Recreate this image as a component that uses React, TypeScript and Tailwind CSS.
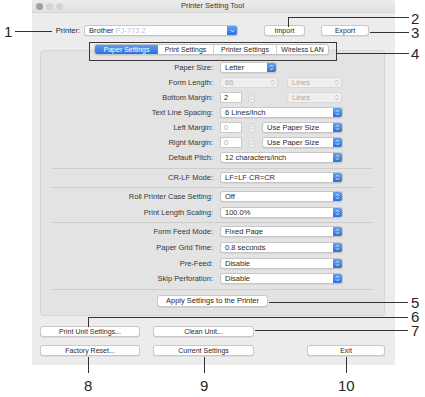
import React from "react";

const Arrows = ({ color }: { color: string }) => (
  <svg width="5" height="7" viewBox="0 0 5 7" fill="none" stroke={color} strokeWidth="0.9">
    <path d="M1 2.7 2.5 1.2 4 2.7M1 4.3 2.5 5.8 4 4.3" />
  </svg>
);

const Popup = ({ value, className, disabled }: { value: string; className: string; disabled?: boolean }) => (
  <div
    className={`flex h-[11px] items-center rounded-[3px] border ${
      disabled
        ? "border-[#d9d9d9] bg-[#efefef] text-[#ababab]"
        : "border-[#c6c6c6] bg-white text-[#2a2a2a] shadow-[0_0.5px_0.5px_rgba(0,0,0,0.12)]"
    } ${className}`}
  >
    <span className="flex-1 truncate pl-[4px] leading-none">{value}</span>
    {disabled ? (
      <span className="flex w-[9px] justify-center">
        <Arrows color="#b8b8b8" />
      </span>
    ) : (
      <span className="flex h-full w-[9px] items-center justify-center rounded-r-[2px] bg-gradient-to-b from-[#64a2f1] to-[#2d6fdc]">
        <Arrows color="#fff" />
      </span>
    )}
  </div>
);

const Field = ({ value, dim }: { value: string; dim?: boolean }) => (
  <div
    className={`flex h-[11px] w-[22px] items-center border border-[#c9c9c9] bg-white pl-[3px] leading-none ${
      dim ? "text-[#b0b0b0]" : "text-[#2a2a2a]"
    }`}
  >
    {value}
  </div>
);

const Stepper = () => (
  <div className="ml-[6px] flex h-[10px] w-[7px] items-center justify-center rounded-[3px] border border-[#d4d4d4] bg-[#f3f3f3]">
    <Arrows color="#b5b5b5" />
  </div>
);

const Row = ({ label, className = "", children }: { label: string; className?: string; children: React.ReactNode }) => (
  <div className={`flex h-[15px] items-center ${className}`}>
    <div className="w-[172px] text-right leading-none text-[#383838]">{label}</div>
    <div className="ml-[7px] flex items-center">{children}</div>
  </div>
);

const Sep = ({ className }: { className: string }) => <div className={`mx-[11px] h-px bg-[#cdcdcd] ${className}`} />;

const Btn = ({ children, className }: { children: React.ReactNode; className: string }) => (
  <div
    className={`flex h-[11px] items-center justify-center rounded-[3px] border border-[#c8c8c8] bg-white text-[7px] leading-none text-[#2a2a2a] shadow-[0_0.5px_0.5px_rgba(0,0,0,0.12)] ${className}`}
  >
    {children}
  </div>
);

// callout numbers: line box 11px, top = glyph top
const Num = ({ n, x, y }: { n: string; x: number; y: number }) => (
  <div className="absolute h-[11px] text-[15px] leading-[11px] text-[#262626]" style={{ left: x, top: y }}>
    {n}
  </div>
);

const HLine = ({ x, y, w }: { x: number; y: number; w: number }) => (
  <div className="absolute h-px bg-[#333]" style={{ left: x, top: y, width: w }} />
);

const VLine = ({ x, y, h }: { x: number; y: number; h: number }) => (
  <div className="absolute w-px bg-[#333]" style={{ left: x, top: y, height: h }} />
);

export default function App() {
  const tabs = [
    { t: "Paper Settings", w: "w-[63px]" },
    { t: "Print Settings", w: "w-[55px]" },
    { t: "Printer Settings", w: "w-[63px]" },
    { t: "Wireless LAN", w: "w-[52px]" },
  ];
  return (
    <div className="relative h-[397px] w-[425px] overflow-hidden bg-white font-['Liberation_Sans',Arial,sans-serif] text-[7.5px]">
      <div className="ml-[32px] flex h-[365px] w-[363px] flex-col bg-[#ececec]">
        {/* title bar */}
        <div className="flex h-[13px] items-center border-b border-[#d8d8d8] bg-gradient-to-b from-[#ececec] to-[#e0e0e0]">
          <div className="flex w-[40px] gap-[3px] pl-[4px]">
            <span className="h-[7px] w-[7px] rounded-full bg-[#a89e95]" />
            <span className="h-[7px] w-[7px] rounded-full bg-[#d3d3d3]" />
            <span className="h-[7px] w-[7px] rounded-full bg-[#d3d3d3]" />
          </div>
          <div className="flex-1 text-center leading-none text-[#3a3a3a]">Printer Setting Tool</div>
          <div className="w-[42px]" />
        </div>

        {/* printer row */}
        <div className="mt-[12px] flex h-[11px] items-center">
          <div className="w-[48px] text-right leading-none text-[#2a2a2a]">Printer:</div>
          <div className="ml-[4px] flex h-[11px] w-[154px] items-center rounded-[3px] border border-[#c6c6c6] bg-white shadow-[0_0.5px_0.5px_rgba(0,0,0,0.12)]">
            <span className="flex-1 pl-[4px] leading-none text-[#2a2a2a]">
              Brother <span className="text-[#b5c3d6] blur-[0.7px]">PJ-773 2</span>
            </span>
            <span className="flex h-full w-[10px] items-center justify-center rounded-r-[2px] bg-gradient-to-b from-[#64a2f1] to-[#2d6fdc]">
              <svg width="5" height="4" viewBox="0 0 5 4" fill="none" stroke="#fff" strokeWidth="0.9">
                <path d="M1 1.2 2.5 2.7 4 1.2" />
              </svg>
            </span>
          </div>
          <Btn className="ml-[26px] w-[41px]">Import</Btn>
          <Btn className="ml-[16px] w-[48px]">Export</Btn>
        </div>

        {/* tabs */}
        <div className="relative z-10 mt-[8px] flex h-[11px] pl-[62px]">
          <div className="flex h-[11px] overflow-hidden rounded-[3px] border border-[#c4c4c4] bg-white text-[7px] leading-none shadow-[0_0.5px_0.5px_rgba(0,0,0,0.12)]">
            {tabs.map((tab, i) => (
              <div
                key={tab.t}
                className={`flex items-center justify-center ${tab.w} ${
                  i === 0 ? "bg-gradient-to-b from-[#5d9cf0] to-[#2f70dc] text-white" : "text-[#2a2a2a]"
                } ${i > 1 ? "border-l border-[#d0d0d0]" : ""}`}
              >
                {tab.t}
              </div>
            ))}
          </div>
        </div>

        {/* panel */}
        <div className="-mt-[5px] ml-[8px] w-[345px] rounded-[3px] border border-[#d6d6d6] bg-[#e3e3e3] pb-[8px] pt-[9px]">
          <Row label="Paper Size:">
            <Popup value="Letter" className="w-[57px]" />
          </Row>
          <Row label="Form Length:">
            <Popup value="66" className="w-[58px]" disabled />
            <Popup value="Lines" className="ml-[9px] w-[55px]" disabled />
          </Row>
          <Row label="Bottom Margin:">
            <Field value="2" />
            <Stepper />
            <Popup value="Lines" className="ml-[32px] w-[55px]" disabled />
          </Row>
          <Row label="Text Line Spacing:">
            <Popup value="6 Lines/Inch" className="w-[123px]" />
          </Row>
          <Row label="Left Margin:">
            <Field value="0" dim />
            <Stepper />
            <Popup value="Use Paper Size" className="ml-[7px] w-[81px]" />
          </Row>
          <Row label="Right Margin:">
            <Field value="0" dim />
            <Stepper />
            <Popup value="Use Paper Size" className="ml-[7px] w-[81px]" />
          </Row>
          <Row label="Default Pitch:">
            <Popup value="12 characters/inch" className="w-[123px]" />
          </Row>
          <Sep className="mt-[3px]" />
          <Row label="CR-LF Mode:" className="mt-[1px]">
            <Popup value="LF=LF CR=CR" className="w-[123px]" />
          </Row>
          <Sep className="mt-[2px]" />
          <Row label="Roll Printer Case Setting:" className="mt-[1px]">
            <Popup value="Off" className="w-[123px]" />
          </Row>
          <Row label="Print Length Scaling:" className="mt-[1px]">
            <Popup value="100.0%" className="w-[123px]" />
          </Row>
          <Sep className="mt-[2px]" />
          <Row label="Form Feed Mode:" className="mt-[1px]">
            <Popup value="Fixed Page" className="w-[123px]" />
          </Row>
          <Row label="Paper Grid Time:" className="mt-[1px]">
            <Popup value="0.8 seconds" className="w-[123px]" />
          </Row>
          <Row label="Pre-Feed:" className="mt-[1px]">
            <Popup value="Disable" className="w-[123px]" />
          </Row>
          <Row label="Skip Perforation:">
            <Popup value="Disable" className="w-[123px]" />
          </Row>
          <Sep className="mt-[3px]" />
          <Btn className="mx-auto mt-[5px] !h-[12px] w-[111px] !text-[7.5px]">Apply Settings to the Printer</Btn>
        </div>

        {/* bottom buttons */}
        <div className="mt-[10px] flex">
          <Btn className="ml-[8px] w-[100px]">Print Unit Settings...</Btn>
          <Btn className="ml-[13px] w-[101px]">Clean Unit...</Btn>
        </div>
        <div className="mt-[8px] flex">
          <Btn className="ml-[8px] w-[100px]">Factory Reset...</Btn>
          <Btn className="ml-[13px] w-[101px]">Current Settings</Btn>
          <Btn className="ml-auto mr-[10px] w-[78px]">Exit</Btn>
        </div>
      </div>

      {/* callouts */}
      <div className="absolute border border-[#3a3a3a]" style={{ left: 89, top: 42, width: 248, height: 19 }} />
      <Num n="1" x={4} y={26} />
      <HLine x={15} y={31} w={37} />
      <Num n="2" x={411} y={13} />
      <VLine x={288} y={17} h={10} />
      <HLine x={288} y={17} w={121} />
      <Num n="3" x={411} y={27} />
      <HLine x={370} y={32} w={39} />
      <Num n="4" x={411} y={48} />
      <HLine x={337} y={53} w={72} />
      <Num n="5" x={411} y={297} />
      <HLine x={269} y={302} w={139} />
      <Num n="6" x={411} y={311} />
      <HLine x={88} y={317} w={320} />
      <VLine x={88} y={317} h={10} />
      <Num n="7" x={411} y={325} />
      <HLine x={255} y={330} w={153} />
      <VLine x={88} y={357} h={16} />
      <Num n="8" x={84} y={380} />
      <VLine x={204} y={357} h={16} />
      <Num n="9" x={200} y={380} />
      <VLine x={346} y={357} h={16} />
      <Num n="10" x={338} y={380} />
    </div>
  );
}
